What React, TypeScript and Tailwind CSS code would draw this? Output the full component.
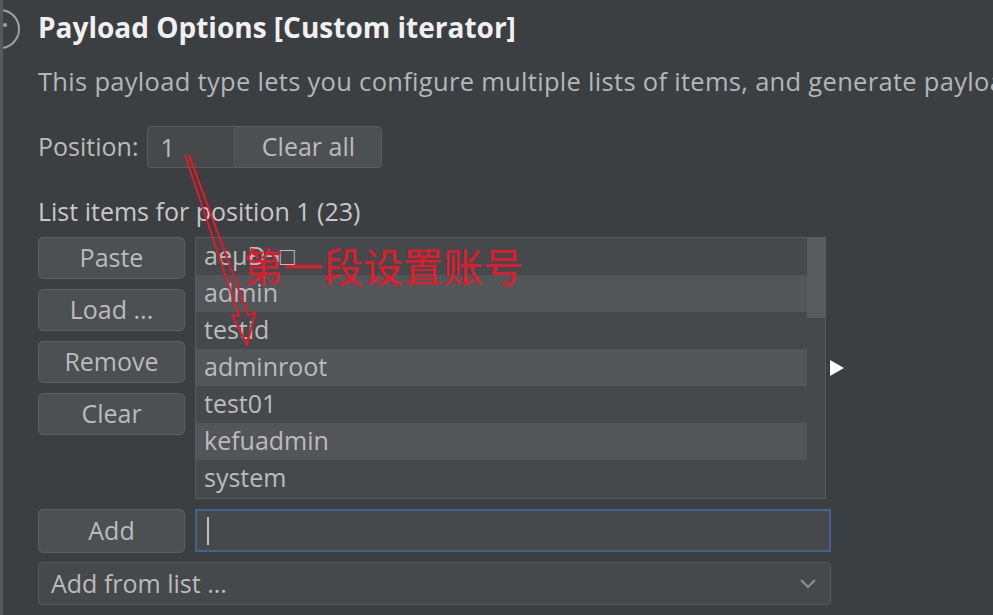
import React from "react";

const items = ["aeμÐ¬\u25a1", "admin", "testid", "adminroot", "test01", "kefuadmin", "system"];
const sideButtons = ["Paste", "Load ...", "Remove", "Clear"];

const font = { fontFamily: '"Open Sans", "Noto Sans", sans-serif' };

export default function App() {
  return (
    <div
      className="relative h-[615px] w-full overflow-hidden bg-[#3c3f41] text-[25px] text-[#bbbbbb] border-l-[3px] border-[#56595b]"
      style={font}
    >
      {/* Header */}
      <div className="flex items-center h-[38px] mt-[8px]">
        <svg width="35" height="38" viewBox="0 0 35 38" className="shrink-0 overflow-visible">
          <circle cx="-3" cy="21" r="19" fill="none" stroke="#9fa1a3" strokeWidth="2" />
          <circle cx="2" cy="17" r="2" fill="#9fa1a3" />
        </svg>
        <h1 className="text-[28px] font-bold text-[#f0f0f0] whitespace-nowrap">
          Payload Options [Custom iterator]
        </h1>
      </div>
      <div className="pl-[35px]">
        <p className="mt-[19px] whitespace-nowrap leading-[32px] text-[25.5px] tracking-[0.3px] text-[#b4b6b8]">
          This payload type lets you configure multiple lists of items, and generate payloads based on
        </p>

        {/* Position */}
        <div className="mt-[29px] flex items-center">
          <span className="mr-[9px]">Position:</span>
          <div className="flex h-[42px] rounded-[4px] border border-[#5a5d5f] bg-[#45494a]">
            <div className="w-[86px] pl-[12px] leading-[40px] text-[#bbbbbb]">1</div>
            <button className="w-[147px] rounded-[4px] border-l border-[#5a5d5f] bg-[#4c5052] text-[#bbbbbb]">
              Clear all
            </button>
          </div>
        </div>

        <div className="mt-[28px] leading-[30px] text-[#c8c8c8]">List items for position 1 (23)</div>

        {/* List area */}
        <div className="mt-[11px] flex items-center">
          <div className="flex items-start gap-[10px]">
            <div className="flex w-[147px] flex-col gap-[10px]">
              {sideButtons.map((b) => (
                <button
                  key={b}
                  className="h-[42px] rounded-[5px] border border-[#5c5f61] bg-[#4c5052] text-[#bbbbbb]"
                >
                  {b}
                </button>
              ))}
            </div>
            <div className="flex h-[262px] w-[631px] border border-[#595c5e] bg-[#46494b]">
              <div className="flex-1">
                {items.map((it, i) => (
                  <div
                    key={i}
                    className={`h-[37px] pl-[8px] leading-[35px] whitespace-nowrap ${
                      i % 2 === 1 ? "bg-[#535658]" : "bg-[#46494b]"
                    }`}
                  >
                    {it}
                  </div>
                ))}
              </div>
              <div className="flex w-[18px] flex-col bg-[#46494b]">
                <div className="h-[80px] bg-[#585b5d]" />
              </div>
            </div>
          </div>
          <svg width="16" height="18" viewBox="0 0 16 18" className="ml-[3px]">
            <polygon points="1,1 15,9 1,17" fill="#ffffff" />
          </svg>
        </div>

        {/* Add row */}
        <div className="mt-[10px] flex gap-[10px]">
          <button className="h-[44px] w-[147px] rounded-[5px] border border-[#5c5f61] bg-[#4c5052] text-[#bbbbbb]">
            Add
          </button>
          <div className="flex h-[43px] w-[636px] items-center border-2 border-[#46608f] bg-[#45494a] pl-[10px]">
            <div className="h-[28px] w-[2px] bg-[#bbbbbb]" />
          </div>
        </div>

        <div className="mt-[9px] flex h-[43px] w-[793px] items-center justify-between rounded-[4px] border border-[#56595b] bg-[#45494a] pl-[12px] pr-[14px]">
          <span>Add from list ...</span>
          <svg width="16" height="10" viewBox="0 0 16 10">
            <polyline points="1,1 8,8 15,1" fill="none" stroke="#8e9092" strokeWidth="2" />
          </svg>
        </div>
      </div>

      {/* Red annotation */}
      <div
        className="absolute left-[240px] top-[240px] text-[40px] leading-[50px] text-[#e3192c] whitespace-nowrap"
        style={{ fontFamily: '"Noto Sans CJK SC", sans-serif' }}
      >
        第一段设置账号
      </div>
      <svg className="absolute left-0 top-0 pointer-events-none" width="993" height="615">
        <g fill="none" stroke="#e3192c" strokeWidth="2" strokeLinejoin="round">
          <path d="M182,155 L236,316 L229,315 L244,345 L252,313 L245,315 L186,155" />
        </g>
      </svg>
    </div>
  );
}
